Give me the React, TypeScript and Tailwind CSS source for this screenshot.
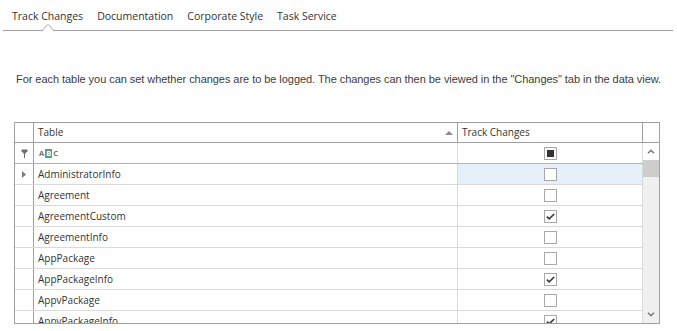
const tabs = ["Track Changes", "Documentation", "Corporate Style", "Task Service"];

const rows = [
  { name: "AdministratorInfo", checked: false },
  { name: "Agreement", checked: false },
  { name: "AgreementCustom", checked: true },
  { name: "AgreementInfo", checked: false },
  { name: "AppPackage", checked: false },
  { name: "AppPackageInfo", checked: true },
  { name: "AppvPackage", checked: false },
  { name: "AppvPackageInfo", checked: true },
];

function Checkbox({ state }: { state: "on" | "off" | "mixed" }) {
  return (
    <span className="flex h-[13px] w-[13px] items-center justify-center border border-[#a8a8a8] bg-white">
      {state === "mixed" && <span className="h-[7px] w-[7px] bg-[#333333]" />}
      {state === "on" && (
        <svg width="11" height="11" viewBox="0 0 11 11">
          <path d="M1.8 5.6 L4.2 7.8 L9.2 3" stroke="#3a3a3a" strokeWidth="1.7" fill="none" />
        </svg>
      )}
    </span>
  );
}

function Chevron({ up }: { up?: boolean }) {
  return (
    <svg width="8" height="5" viewBox="0 0 8 5">
      <path
        d={up ? "M1 4.2 L4 1.2 L7 4.2" : "M1 0.8 L4 3.8 L7 0.8"}
        stroke="#7a7a7a"
        strokeWidth="1.5"
        fill="none"
      />
    </svg>
  );
}

export default function App() {
  return (
    <div className="h-[331px] w-[677px] overflow-hidden bg-white font-['Open_Sans',sans-serif] text-[#333333]">
      {/* tabs */}
      <div className="relative ml-[3px] flex h-[31px] w-[670px] gap-[14px] border-b border-[#a0a0a0] pl-[9px] pt-[8px] text-[10.5px]">
        {tabs.map((t) => (
          <span key={t} className="leading-[16px]">
            {t}
          </span>
        ))}
        <svg className="absolute left-[38px] top-[23px]" width="14" height="9" viewBox="0 0 14 9">
          <rect x="2" y="6.5" width="10" height="2" fill="white" />
          <path d="M1 7.5 L7 1.5 L13 7.5" stroke="#a0a0a0" strokeWidth="1" fill="none" />
        </svg>
      </div>

      <p className="ml-[16px] mt-[41px] whitespace-nowrap font-['Liberation_Sans',sans-serif] text-[11px] leading-[14px] tracking-[-0.05px] text-[#3c3c3c]">
        For each table you can set whether changes are to be logged. The changes can then be viewed in the "Changes" tab in the data view.
      </p>

      {/* grid */}
      <div className="ml-[14px] mt-[36px] flex h-[202px] w-[646px] flex-col overflow-hidden border border-[#a0a0a0] text-[10px] text-[#333333]">
        <div className="flex h-[20px] shrink-0 border-b border-[#a0a0a0]">
          <div className="w-[19px] border-r border-[#a0a0a0]" />
          <div className="flex w-[424px] items-center justify-between border-r border-[#a0a0a0] pl-[4px] pr-[4px]">
            <span>Table</span>
            <svg width="8" height="4" viewBox="0 0 8 4">
              <path d="M0 4 L4 0 L8 4 Z" fill="#8a8a8a" />
            </svg>
          </div>
          <div className="flex w-[185px] items-center border-r border-[#a0a0a0] pl-[4px]">Track Changes</div>
          <div className="w-[16px]" />
        </div>

        <div className="flex min-h-0 flex-1">
          <div className="w-[628px] shrink-0">
            {/* filter row */}
            <div className="flex h-[21px] border-b border-[#b4b4b4]">
              <div className="flex w-[19px] items-center justify-center border-r border-[#a0a0a0]">
                <svg width="7" height="9" viewBox="0 0 7 9">
                  <path d="M0.5 0.5 H6.5 V2.5 L4.5 4 V5 H2.5 V4 L0.5 2.5 Z" fill="#6e6e6e" />
                  <rect x="3" y="5" width="1" height="4" fill="#6e6e6e" />
                </svg>
              </div>
              <div className="flex w-[424px] items-center border-r border-[#d9d9d9] pl-[5px]">
                <span className="flex items-center gap-[1px] text-[7.5px] font-bold leading-[9px] text-[#707070]">
                  <span>A</span>
                  <span className="bg-[#5a9e88] px-[1px] text-white">B</span>
                  <span>C</span>
                </span>
              </div>
              <div className="flex w-[185px] items-center justify-center border-r border-[#d9d9d9]">
                <Checkbox state="mixed" />
              </div>
            </div>

            {rows.map((r, i) => (
              <div key={r.name} className="flex h-[21px] border-b border-[#d9d9d9]">
                <div className="flex w-[19px] items-center justify-center border-r border-[#a0a0a0]">
                  {i === 0 && (
                    <svg width="4" height="7" viewBox="0 0 4 7">
                      <path d="M0 0 L4 3.5 L0 7 Z" fill="#7a7a7a" />
                    </svg>
                  )}
                </div>
                <div className="flex w-[424px] items-center border-r border-[#d9d9d9] pl-[4px]">{r.name}</div>
                <div
                  className={
                    i === 0
                      ? "flex w-[185px] items-center justify-center border-r border-[#d9d9d9] bg-[#e5f0fa]"
                      : "flex w-[185px] items-center justify-center border-r border-[#d9d9d9]"
                  }
                >
                  <Checkbox state={r.checked ? "on" : "off"} />
                </div>
              </div>
            ))}
          </div>

          {/* scrollbar */}
          <div className="flex w-[16px] flex-col">
            <div className="flex h-[17px] items-center justify-center bg-white">
              <Chevron up />
            </div>
            <div className="h-[17px] bg-[#cdcdcd]" />
            <div className="flex flex-1 flex-col justify-end bg-[#f0f0f0]">
              <div className="flex h-[17px] items-center justify-center">
                <Chevron />
              </div>
            </div>
          </div>
        </div>
      </div>
    </div>
  );
}
